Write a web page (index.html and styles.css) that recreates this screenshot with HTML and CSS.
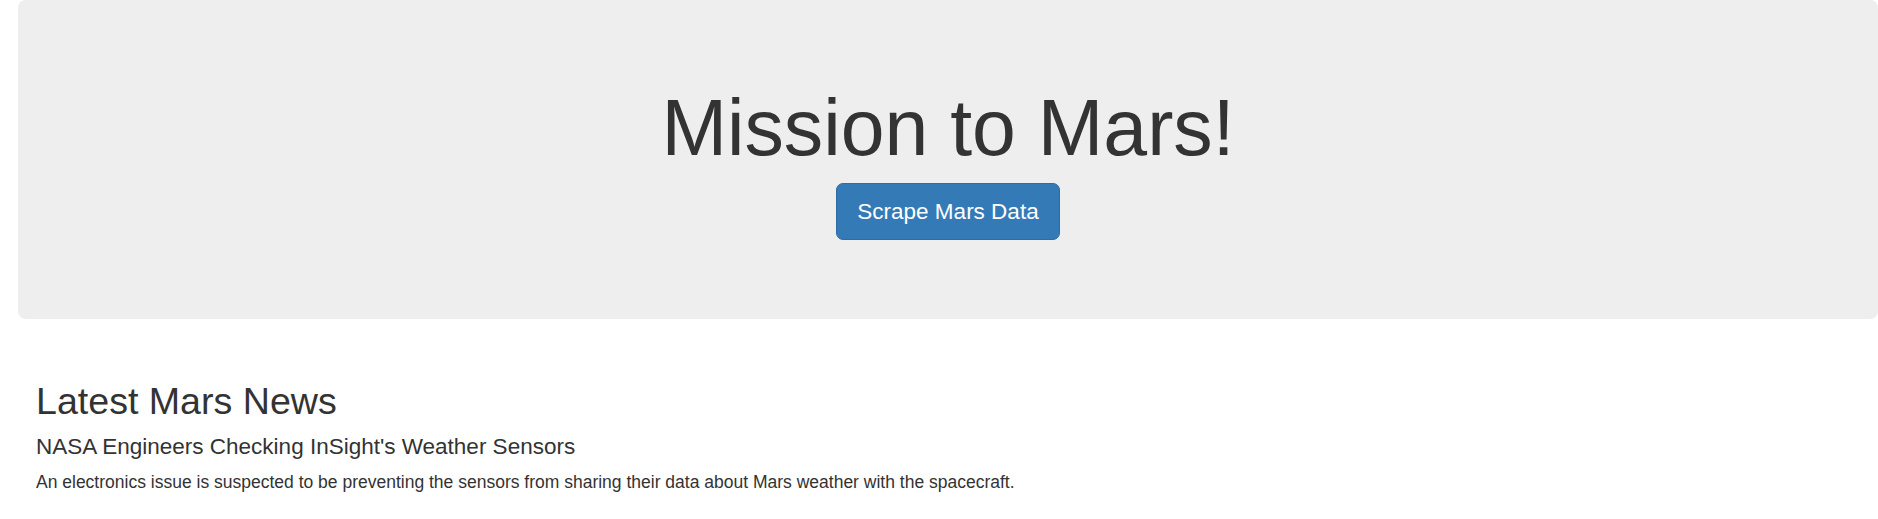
FILE: index.html
```html
<!DOCTYPE html>
<html lang="en">
<head>
<meta charset="utf-8">
<title>Mission to Mars</title>
<link rel="stylesheet" href="styles.css">
</head>
<body>
  <div class="page">
    <div class="jumbotron">
      <h1 class="title">Mission to Mars!</h1>
      <p class="actions"><a class="btn" href="#">Scrape Mars Data</a></p>
    </div>
    <section class="news">
      <h2 class="news-heading">Latest Mars News</h2>
      <h4 class="news-title">NASA Engineers Checking InSight's Weather Sensors</h4>
      <p class="news-text">An electronics issue is suspected to be preventing the sensors from sharing their data about Mars weather with the spacecraft.</p>
    </section>
  </div>
</body>
</html>
```

FILE: styles.css
```css
html, body {
  margin: 0;
  padding: 0;
  background: #fff;
}

body {
  font-family: "Liberation Sans", Arial, Helvetica, sans-serif;
  color: #333;
}

.page {
  padding-left: 18px;
}

.jumbotron {
  background: #eeeeee;
  border-radius: 8px;
  padding: 85px 0 79px;
  text-align: center;
}

.title {
  margin: 0 0 11px;
  font-size: 78.75px;
  line-height: 87px;
  font-weight: 400;
  color: #333;
}

.actions {
  margin: 0;
  display: flex;
  justify-content: center;
}

.btn {
  display: inline-block;
  box-sizing: border-box;
  height: 57px;
  padding: 0 20px;
  line-height: 55px;
  font-size: 22.5px;
  color: #fff;
  background: #337ab7;
  border: 1px solid #2e6da4;
  border-radius: 7px;
  text-decoration: none;
}

.news {
  padding: 62px 0 0 18px;
}

.news-heading {
  margin: 0 0 12px;
  font-size: 37.6px;
  line-height: 41px;
  font-weight: 400;
  color: #333;
}

.news-title {
  margin: 0 0 11px;
  font-size: 22.5px;
  line-height: 25px;
  font-weight: 400;
  color: #333;
}

.news-text {
  margin: 0;
  font-size: 17.5px;
  line-height: 25px;
  color: #333;
}
```
